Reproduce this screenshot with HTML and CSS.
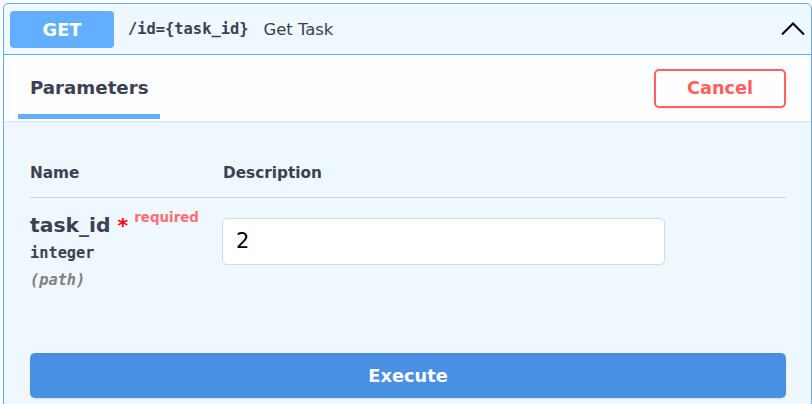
FILE: index.html
```html
<!DOCTYPE html>
<html>
<head>
<meta charset="utf-8">
<link rel="stylesheet" href="styles.css">
</head>
<body>
<div class="opblock">
  <div class="summary">
    <span class="method">GET</span>
    <span class="path">/id={task_id}</span>
    <span class="desc">Get Task</span>
    <svg class="chevron" width="24" height="14" viewBox="0 0 24 14"><polyline points="1,12.5 12,1.5 23,12.5" fill="none" stroke="#000" stroke-width="2"/></svg>
  </div>
  <div class="tabs">
    <div class="tab">Parameters</div>
    <button class="cancel">Cancel</button>
  </div>
  <div class="params">
    <div class="thead">
      <div class="col-name">Name</div>
      <div class="col-desc">Description</div>
    </div>
    <div class="row">
      <div class="col-name">
        <div class="pname">task_id<span class="star">&nbsp;*</span><span class="req">required</span></div>
        <div class="ptype">integer</div>
        <div class="pin">(path)</div>
      </div>
      <div class="col-desc">
        <input class="pinput" type="text" value="2">
      </div>
    </div>
  </div>
  <div class="exec-wrap">
    <button class="execute">Execute</button>
  </div>
</div>
</body>
</html>
```

FILE: styles.css
```css
html, body {
  margin: 0;
  padding: 0;
  overflow: hidden;
  background: #ffffff;
}

body {
  font-family: "DejaVu Sans", sans-serif;
  color: #3b4151;
}

.opblock {
  margin: 3px 0 0 3px;
  width: 809px;
  height: 440px;
  box-sizing: border-box;
  border: 1px solid #61affe;
  border-radius: 5px;
  background: #eff7ff;
}

.summary {
  display: flex;
  align-items: center;
  height: 50px;
  padding: 0 6px;
  border-bottom: 1px solid #61affe;
}

.method {
  display: flex;
  align-items: center;
  justify-content: center;
  width: 104px;
  height: 37px;
  border-radius: 4px;
  background: #61affe;
  color: #ffffff;
  font-weight: bold;
  font-size: 17.8px;
}

.path {
  margin-left: 14px;
  font-family: "DejaVu Sans Mono", monospace;
  font-weight: bold;
  font-size: 15.4px;
  color: #3b4151;
}

.desc {
  margin-left: 15px;
  font-size: 16.4px;
  color: #3b4151;
}

.chevron {
  margin-left: auto;
  margin-right: 0;
  display: block;
}

.tabs {
  display: flex;
  align-items: center;
  justify-content: space-between;
  height: 66px;
  padding: 0 25px 0 14px;
  background: rgba(255, 255, 255, 0.8);
  box-shadow: 0 1px 2px rgba(0, 0, 0, 0.1);
}

.tab {
  align-self: flex-start;
  padding: 22px 12px 0;
  height: 37px;
  border-bottom: 5px solid #61affe;
  font-size: 18.2px;
  font-weight: bold;
  line-height: 21.6px;
  color: #3b4151;
}

.cancel {
  width: 132px;
  height: 39px;
  box-sizing: border-box;
  border: 2px solid #ff6060;
  border-radius: 5px;
  background: transparent;
  color: #ff6060;
  font-family: "DejaVu Sans", sans-serif;
  font-weight: bold;
  font-size: 17.7px;
  box-shadow: 0 1px 2px rgba(0, 0, 0, 0.1);
  padding: 0;
}

.params {
  padding: 43px 25px 0 26px;
}

.thead {
  display: flex;
  font-size: 15.3px;
  font-weight: bold;
  line-height: 18.4px;
  padding-bottom: 14px;
  border-bottom: 1px solid #cbd2de;
  height: 18.5px;
}

.col-name {
  width: 192px;
  flex: none;
}

.col-desc {
  flex: 1;
}

.thead .col-desc {
  padding-left: 1px;
}

.row {
  display: flex;
  padding-top: 15px;
}

.pname {
  font-size: 20.3px;
  font-weight: bold;
  line-height: 24.4px;
  height: 24.4px;
  white-space: nowrap;
}

.star {
  color: #ff0000;
}

.req {
  margin-left: 6px;
  font-size: 13.4px;
  line-height: 10px;
  color: #ff6f6f;
  vertical-align: 10px;
}

.ptype {
  margin-top: 7px;
  font-family: "DejaVu Sans Mono", monospace;
  font-weight: bold;
  font-size: 15.3px;
  line-height: 18.4px;
}

.pin {
  margin-top: 9px;
  font-family: "DejaVu Sans Mono", monospace;
  font-weight: bold;
  font-style: italic;
  font-size: 15.3px;
  line-height: 18.4px;
  color: #808080;
}

.pinput {
  display: block;
  margin-top: 5px;
  width: 443px;
  height: 47px;
  box-sizing: border-box;
  border: 1px solid #d9d9d9;
  border-radius: 5px;
  background: #ffffff;
  padding: 0 13px;
  font-family: "DejaVu Sans", sans-serif;
  font-size: 21px;
  color: #000000;
  outline: none;
}

.exec-wrap {
  padding: 63px 25px 0 26px;
}

.execute {
  display: block;
  width: 100%;
  height: 45px;
  border: none;
  border-radius: 5px;
  background: #4990e2;
  color: #ffffff;
  font-family: "DejaVu Sans", sans-serif;
  font-weight: bold;
  font-size: 17.8px;
  box-shadow: 0 1px 2px rgba(0, 0, 0, 0.1);
}
```
